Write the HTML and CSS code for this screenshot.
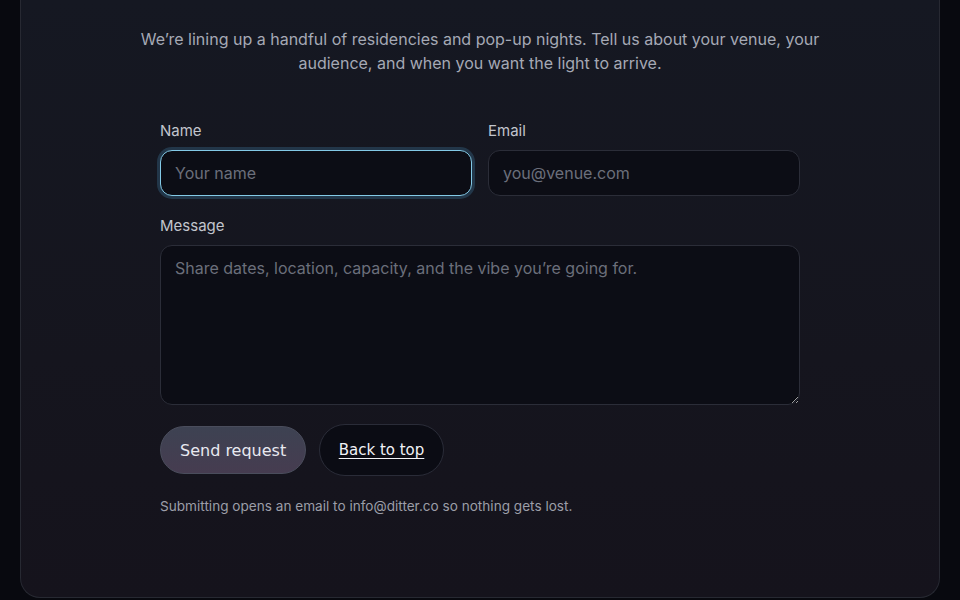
FILE: index.html
```html
<!DOCTYPE html>
<html lang="en">
<head>
<meta charset="utf-8">
<title>Contact</title>
<link rel="stylesheet" href="styles.css">
</head>
<body>
<div class="page">
  <section class="card" id="contact">
    <p class="intro">We’re lining up a handful of residencies and pop-up nights. Tell us about your venue, your audience, and when you want the light to arrive.</p>
    <form class="form" action="mailto:info@ditter.co" method="post" enctype="text/plain">
      <div class="row">
        <label class="field">
          <span class="label">Name</span>
          <input class="input is-focus" type="text" name="name" placeholder="Your name">
        </label>
        <label class="field">
          <span class="label">Email</span>
          <input class="input" type="email" name="email" placeholder="you@venue.com">
        </label>
      </div>
      <label class="field">
        <span class="label">Message</span>
        <textarea class="input textarea" name="message" placeholder="Share dates, location, capacity, and the vibe you’re going for."></textarea>
      </label>
      <div class="actions">
        <button class="btn btn-primary" type="submit">Send request</button>
        <a class="btn btn-ghost" href="#top">Back to top</a>
      </div>
      <p class="note">Submitting opens an email to info@ditter.co so nothing gets lost.</p>
    </form>
  </section>
</div>
</body>
</html>
```

FILE: styles.css
```css
html, body {
  margin: 0;
  padding: 0;
}

body {
  background: #08090f;
  font-family: Inter, "Noto Sans", sans-serif;
  color: #c4c7cf;
  height: 600px;
  overflow: hidden;
}

.page {
  padding: 0 20px;
}

.card {
  background: linear-gradient(180deg, #151822 0%, #15151e 60%, #15131c 100%);
  border: 1px solid #272932;
  border-top: none;
  border-radius: 0 0 20px 20px;
  padding: 27px 0 80px;
  box-sizing: border-box;
  height: 598px;
}

.intro {
  margin: 0 auto;
  max-width: 690px;
  text-align: center;
  font-size: 16px;
  line-height: 24px;
  color: #a5a9b5;
}

.form {
  width: 640px;
  margin: 46px auto 0;
  display: flex;
  flex-direction: column;
  gap: 20px;
}

.row {
  display: grid;
  grid-template-columns: 1fr 1fr;
  gap: 16px;
}

.field {
  display: flex;
  flex-direction: column;
  gap: 9px;
}

.label {
  font-size: 15px;
  line-height: 20px;
  color: #c2c5cd;
}

.input {
  box-sizing: border-box;
  height: 46px;
  width: 100%;
  background: #0c0d15;
  border: 1px solid #2b2d38;
  border-radius: 12px;
  padding: 0 14px;
  font-family: Inter, "Noto Sans", sans-serif;
  font-size: 16px;
  color: #e6e8ee;
  outline: none;
}

.input::placeholder {
  color: #6b6f7b;
}

.input.is-focus {
  border-color: #83c9e6;
  box-shadow: 0 0 0 3px rgba(80, 170, 220, 0.22);
}

.textarea {
  height: 160px;
  padding: 11px 14px;
  line-height: 22px;
  resize: vertical;
  display: block;
}

.actions {
  display: flex;
  align-items: center;
  gap: 13px;
  margin-top: -1px;
}

.btn {
  box-sizing: border-box;
  display: inline-flex;
  align-items: center;
  justify-content: center;
  border-radius: 999px;
  font-family: "DejaVu Sans", sans-serif;
  cursor: pointer;
}

.btn-primary {
  height: 48px;
  padding: 0 19px;
  font-size: 16px;
  background: linear-gradient(180deg, #3d4252 0%, #463c50 100%);
  border: 1px solid #4a4d5c;
  color: #e8e9f0;
}

.btn-ghost {
  height: 52px;
  padding: 0 18.5px;
  font-size: 15px;
  background: #0b0c14;
  border: 1px solid #2a2c38;
  color: #f1f2f6;
  text-decoration: underline;
  text-underline-offset: 3px;
}

.note {
  margin: 0;
  font-size: 13.6px;
  line-height: 20px;
  color: #9c9ea8;
}
```
